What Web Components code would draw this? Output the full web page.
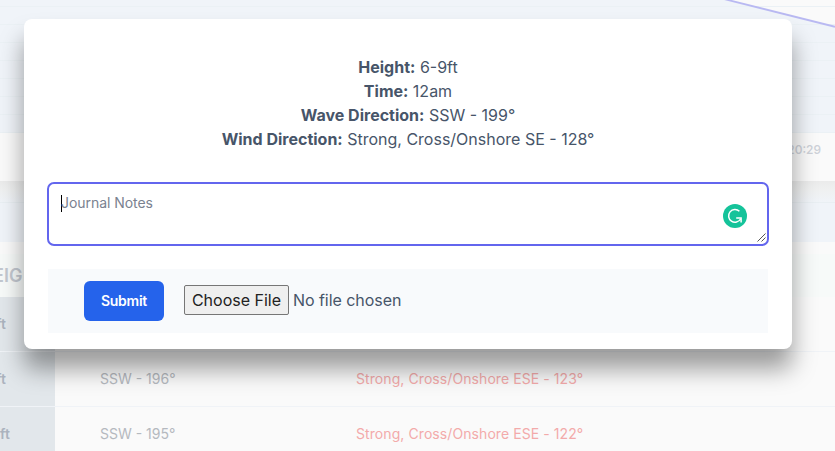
<!DOCTYPE html>
<html lang="en">
<head>
<meta charset="utf-8">
<title>Surf Journal</title>
<style>
html,body{margin:0;height:100%;overflow:hidden}
body{font-family:Inter,"Liberation Sans",sans-serif;background:#fafafa;color:#475569}
</style>
</head>
<body>
<surf-page></surf-page>
<script>
const define = (name, html, init) => customElements.define(name, class extends HTMLElement {
  constructor() {
    super();
    this.attachShadow({mode: 'open'}).innerHTML = html;
    if (init) init(this.shadowRoot, this);
  }
});

define('tide-chart', `<style>
:host{display:block;height:133px;overflow:hidden}
svg{display:block}
</style>
<svg width="835" height="133" viewBox="0 0 835 133">
<rect width="835" height="133" fill="#f0f4f9"/>
<path d="M727 0L835 27V0z" fill="#fafafa"/>
<path d="M0 6.5H835M0 24.5H835M0 42.5H835M0 60.5H835M0 78.5H835M0 96.5H835M0 114.5H835M0 132.5H835" stroke="#ebf1f5"/>
<path d="M724 -1L835 26.8" stroke="#b9b9f2" stroke-width="1.8"/>
</svg>`);

define('time-bar', `<style>
:host{display:flex;justify-content:flex-end;box-sizing:border-box;height:48px;padding:8px 14px 0 0;background:#fafafa;font:500 12px/17px Inter,sans-serif;color:#cdd1d8}
</style><slot></slot>`);

define('chart-band', `<style>
:host{display:block;box-sizing:border-box;height:61px;background:linear-gradient(#ebebeb,#eff0f0 8px,#f0f4f900 22px),#f0f4f9}
div{height:21px;border-bottom:1px solid #e9eff3}
</style><div></div>`);

define('table-head', `<style>
:host{display:flex;box-sizing:border-box;height:55px;padding-top:12px;background:linear-gradient(#fafafa 12px,#f7faf9 12px)}
div{height:43px;font:600 18px/43px Inter,sans-serif;color:#c3c8d0;white-space:nowrap;margin-left:-7px}
</style><div><slot></slot></div>`);

define('forecast-row', `<style>
:host{display:grid;grid-template-columns:55px 301px 1fr;height:54px;border-bottom:1px solid #f0f3f7;font:400 14px/54px Inter,sans-serif;color:#b5b9bf}
.h{background:#e2e7eb;font-weight:600;color:#abb3be}
.h span{margin-left:-4px}
.wide span{margin-left:0}
.w{padding-left:45px}
.d{color:#f3aaaa;letter-spacing:.08px}
</style><div class="h"><span><slot name="height"></slot></span></div><div class="w"><slot name="wave"></slot></div><div class="d"><slot name="wind"></slot></div>`,
(root, el) => { if (el.hasAttribute('wide')) root.querySelector('.h').classList.add('wide'); });

define('journal-detail', `<style>
:host{display:block;text-align:center;font-size:16px;line-height:24px}
b{font-weight:700}
</style><b><slot name="label"></slot></b> <slot></slot>`);

define('journal-notes', `<style>
:host{display:block;position:relative}
.box{display:flex;box-sizing:border-box;width:722px;height:64px;margin:0 -1px;padding:7px 12px;border:2px solid #6366ee;border-radius:7px;background:#fff;font-size:14px;line-height:24px;letter-spacing:-.05px;color:#7a8290}
.caret{width:1px;height:17px;margin:4px -1px 0 0;background:#000}
svg{position:absolute}
.g{left:675px;top:22px}
.r{left:709px;top:51px}
</style>
<div class="box"><span class="caret"></span><slot></slot></div>
<svg class="g" width="24" height="24" viewBox="0 0 24 24"><circle cx="12" cy="12" r="12" fill="#15c39a"/><path d="M16.4 7.2A6.4 6.4 0 1 0 17.6 15" fill="none" stroke="#fff" stroke-width="1.5"/><path d="M13.2 14H18.1V18.6" fill="none" stroke="#fff" stroke-width="1.5"/></svg>
<svg class="r" width="10" height="10" viewBox="0 0 10 10"><path d="M0.5 8.5L8.5 0.5M4.5 8.5L8.5 4.5" stroke="#555" stroke-width="1"/></svg>`);

define('journal-actions', `<style>
:host{display:flex;align-items:center;box-sizing:border-box;height:64px;padding-left:36px;background:#f8fafc;font-size:16px;line-height:24px}
.submit{box-sizing:border-box;width:80px;height:40px;margin-right:20px;padding:0;border:0;border-radius:6px;background:#2563eb;color:#fff;font:600 14px/40px Inter,sans-serif;letter-spacing:-.25px}
.file{box-sizing:border-box;width:105px;height:30px;margin:-2px 4px 0 0;padding:0;border:1px solid #767676;border-radius:2px;background:#efefef;color:#222;font:400 16px/26px Inter,sans-serif;white-space:nowrap}
.none{margin-top:-2px;letter-spacing:-.05px}
</style><button class="submit">Submit</button><button class="file">Choose File</button><span class="none">No file chosen</span>`);

define('journal-modal', `<style>
:host{display:block;box-sizing:border-box;width:768px;height:330px;padding:36px 24px 0;border-radius:8px;background:#fff;box-shadow:0 20px 25px 0 rgba(0,0,0,.38)}
.info{height:127px}
.notes{height:87px}
</style><div class="info"><slot></slot></div><div class="notes"><slot name="notes"></slot></div><slot name="actions"></slot>`);

define('surf-page', `<style>
:host{display:grid;width:835px;height:451px;overflow:hidden}
.page,.over{grid-area:1/1}
.page{min-height:0;height:451px;overflow:hidden}
.over{display:flex;justify-content:flex-start;align-items:flex-start;padding:19px 0 0 24px;z-index:1}
</style>
<div class="page">
<tide-chart></tide-chart><time-bar>20:29</time-bar><chart-band></chart-band><table-head>EIG</table-head>
<forecast-row><span slot="height">ft</span></forecast-row>
<forecast-row><span slot="height">ft</span><span slot="wave">SSW - 196°</span><span slot="wind">Strong, Cross/Onshore ESE - 123°</span></forecast-row>
<forecast-row wide><span slot="height">ft</span><span slot="wave">SSW - 195°</span><span slot="wind">Strong, Cross/Onshore ESE - 122°</span></forecast-row>
</div>
<div class="over"><journal-modal>
<journal-detail><span slot="label">Height:</span>6-9ft</journal-detail>
<journal-detail><span slot="label">Time:</span>12am</journal-detail>
<journal-detail><span slot="label">Wave Direction:</span>SSW - 199°</journal-detail>
<journal-detail><span slot="label">Wind Direction:</span>Strong, Cross/Onshore SE - 128°</journal-detail>
<journal-notes slot="notes">Journal Notes</journal-notes>
<journal-actions slot="actions"></journal-actions>
</journal-modal></div>`);
</script>
</body>
</html>
